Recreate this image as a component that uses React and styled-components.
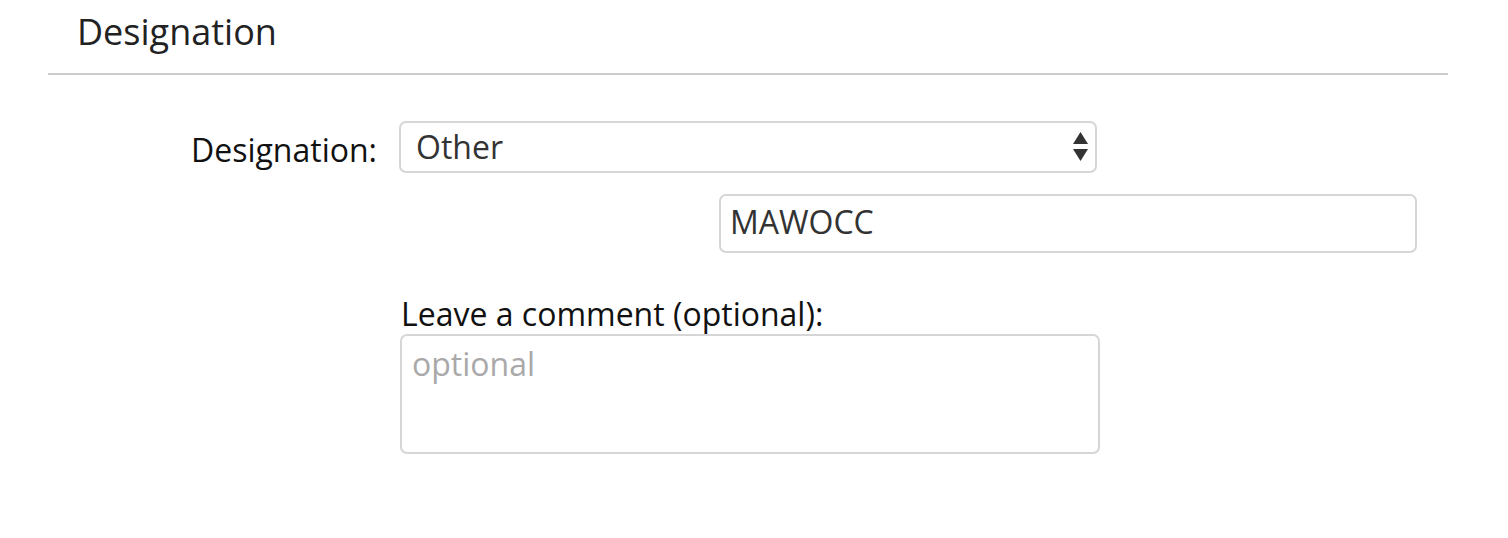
import React from "react";
import styled, { createGlobalStyle } from "styled-components";

const GlobalStyle = createGlobalStyle`
  body {
    margin: 0;
    background: #fff;
    font-family: "Open Sans", "Noto Sans", sans-serif;
    color: #222;
  }
`;

const Panel = styled.div`
  width: 1400px;
  margin: 0 0 0 48px;
`;

const Header = styled.div`
  border-bottom: 2px solid #cccccc;
  padding: 10px 0 0 29px;
  height: 75px;
  box-sizing: border-box;
`;

const Title = styled.h2`
  margin: 0;
  font-size: 36px;
  font-weight: 400;
  line-height: 44px;
  color: #222;
`;

const Body = styled.div`
  display: flex;
  flex-direction: column;
  padding: 46px 0 0;
`;

const Row = styled.div`
  display: flex;
  align-items: center;
  margin-left: ${({ $offset }) => $offset || 0}px;
  margin-top: ${({ $top }) => $top || 0}px;
`;

const Label = styled.label`
  width: 351px;
  padding: 4px 22px 0 0;
  box-sizing: border-box;
  text-align: right;
  font-size: 32px;
  color: #111;
`;

const SelectBox = styled.div`
  position: relative;
  width: 698px;
  height: 52px;
  box-sizing: border-box;
  border: 2px solid #d6d6d6;
  border-radius: 7px;
  display: flex;
  align-items: center;
  padding: 0 15px 2px;
  font-size: 32px;
  color: #333;
`;

const Arrows = styled.svg`
  position: absolute;
  right: 7px;
  top: 9px;
`;

const TextInput = styled.div`
  width: 698px;
  height: 59px;
  box-sizing: border-box;
  border: 2px solid #d6d6d6;
  border-radius: 7px;
  display: flex;
  align-items: center;
  padding: 0 9px 4px;
  font-size: 32px;
  color: #333;
`;

const Stack = styled.div`
  display: flex;
  flex-direction: column;
  margin: 41px 0 0 352px;
`;

const CommentLabel = styled.div`
  font-size: 32px;
  color: #111;
  line-height: 40px;
  padding-left: 1px;
`;

const TextArea = styled.div`
  width: 700px;
  height: 120px;
  box-sizing: border-box;
  border: 2px solid #d6d6d6;
  border-radius: 7px;
  padding: 8px 10px;
  font-size: 32px;
  line-height: 40px;
  color: #a9a9a9;
`;

export default function App() {
  return (
    <>
      <GlobalStyle />
      <Panel>
        <Header>
          <Title>Designation</Title>
        </Header>
        <Body>
          <Row>
            <Label>Designation:</Label>
            <SelectBox>
              Other
              <Arrows width="15" height="29" viewBox="0 0 15 29">
                <path d="M7.5 0 L15 12 L0 12 Z" fill="#333" />
                <path d="M0 17 L15 17 L7.5 29 Z" fill="#333" />
              </Arrows>
            </SelectBox>
          </Row>
          <Row $offset={671} $top={21}>
            <TextInput>MAWOCC</TextInput>
          </Row>
          <Stack>
            <CommentLabel>Leave a comment (optional):</CommentLabel>
            <TextArea>optional</TextArea>
          </Stack>
        </Body>
      </Panel>
    </>
  );
}
